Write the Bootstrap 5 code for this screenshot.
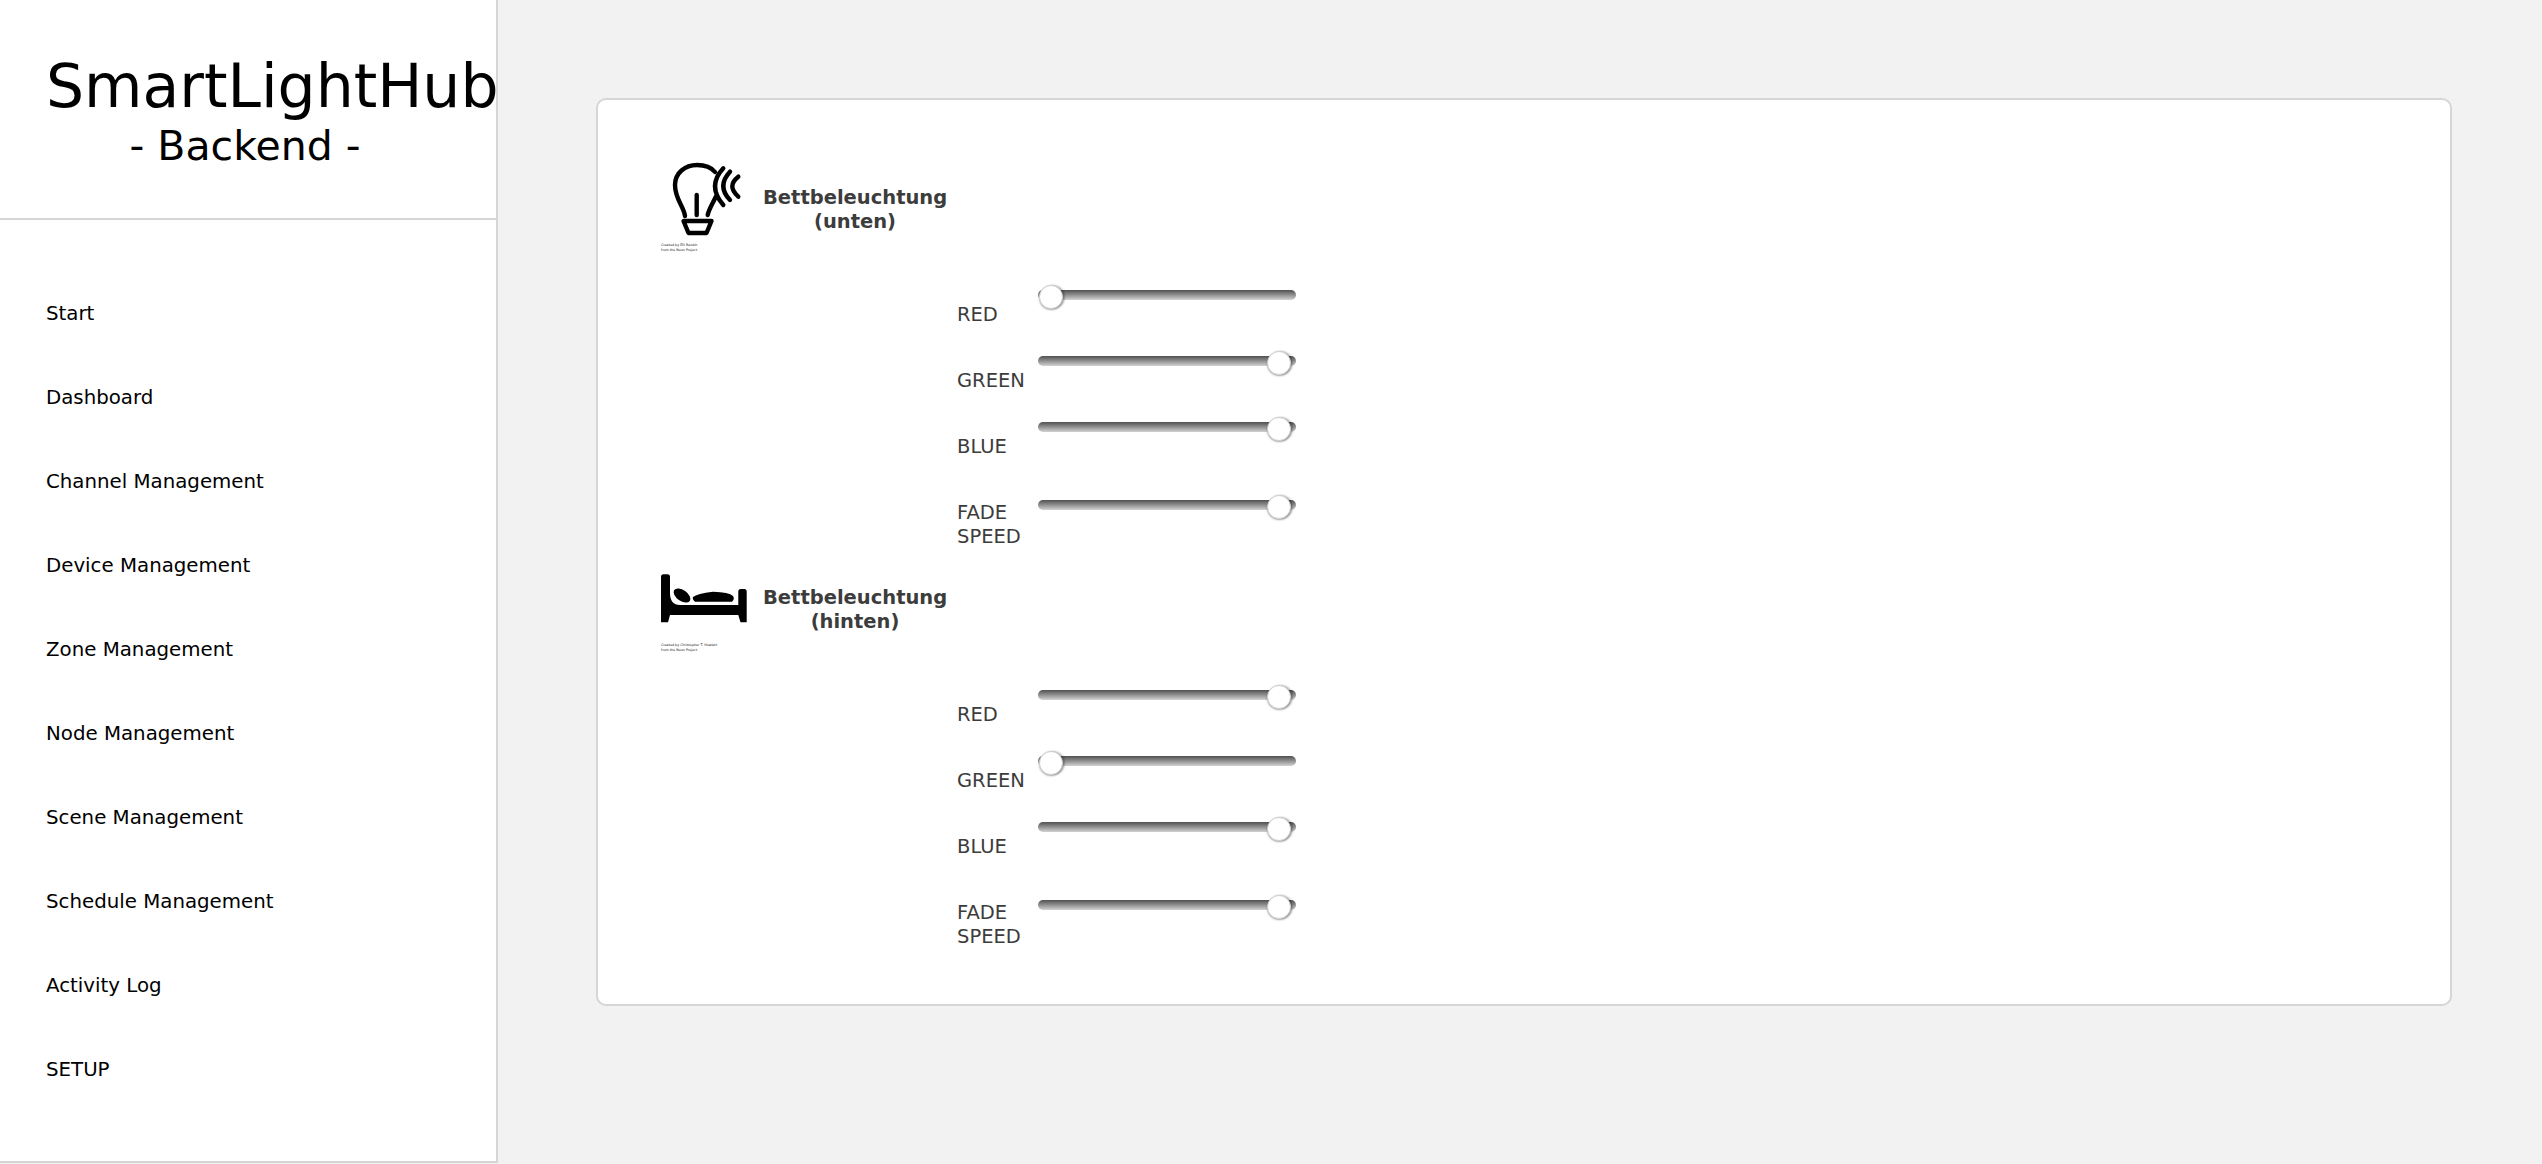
<!DOCTYPE html>
<html lang="de">
<head>
  <meta charset="UTF-8" />
  <meta name="viewport" content="width=device-width, initial-scale=1.0"/>
  <title>SmartLightHub | Backend</title>
  <link href="https://cdn.jsdelivr.net/npm/bootstrap@5.3.3/dist/css/bootstrap.min.css" rel="stylesheet">
  <style>
    html, body {
      height: 100%;
    }
    body {
      background-color: #f2f2f2;
      font-family: "DejaVu Sans", Verdana, sans-serif;
      overflow: hidden;
    }
    .side-panel {
      width: 498px;
      height: 1163px;
      background: #fff;
      border-right: 2px solid #d6d6d6;
      flex-shrink: 0;
    }
    .side-head {
      height: 220px;
      padding-top: 51px;
      border-bottom: 2px solid #d6d6d6;
      color: #000;
    }
    .hub-title {
      font-size: 60px;
      line-height: 70px;
      padding-left: 46px;
      white-space: nowrap;
      margin: 0;
    }
    .hub-sub {
      font-size: 41px;
      line-height: 46px;
      width: 490px;
      text-align: center;
      margin: 2px 0 0;
    }
    .side-menu {
      padding: 52px 0 49px;
      border-bottom: 2px solid #d6d6d6;
    }
    .side-menu a {
      display: flex;
      align-items: center;
      height: 84px;
      padding-left: 46px;
      font-size: 19.8px;
      color: #000;
      text-decoration: none;
    }
    .main-area {
      padding: 98px 0 0 98px;
    }
    .light-card {
      width: 1856px;
      height: 908px;
      padding: 53px 0 0 63px;
      background: #fff;
      border: 2px solid #d6d6d6;
      border-radius: 10px;
    }
    .light-block {
      height: 400px;
    }
    .light-head {
      height: 132px;
    }
    .light-icon {
      width: 102px;
      height: 100px;
      flex-shrink: 0;
    }
    .light-name {
      width: 184px;
      margin-top: 33px;
      font-size: 19.5px;
      font-weight: 700;
      line-height: 24px;
      text-align: center;
      color: #3c3c3c;
      white-space: nowrap;
    }
    .fader-row {
      height: 66px;
      margin-left: 296px;
    }
    .fader-row.fade-row {
      height: 70px;
    }
    .fader-label {
      width: 81px;
      margin-top: 18px;
      font-size: 19.5px;
      line-height: 24px;
      color: #3c3c3c;
    }
    .fader-wrap {
      padding-top: 5px;
    }
    .fade-row .fader-wrap {
      padding-top: 17px;
    }
    .fader {
      -webkit-appearance: none;
      appearance: none;
      display: block;
      box-sizing: border-box;
      width: 258px;
      height: 10px;
      padding: 0 5px 0 1px;
      margin: 0;
      border-radius: 5px;
      background: linear-gradient(#505050, #d2d2d2);
      outline: none;
    }
    .fader::-webkit-slider-runnable-track {
      height: 10px;
      background: transparent;
    }
    .fader::-webkit-slider-thumb {
      -webkit-appearance: none;
      width: 24px;
      height: 24px;
      margin-top: -5px;
      border-radius: 50%;
      background: #fff;
      border: 1px solid #cfcfcf;
      box-shadow: 0 1px 2px rgba(0, 0, 0, .3), 2px 0 2px rgba(0, 0, 0, .25);
    }
    .icon-note {
      font-family: "DejaVu Sans", sans-serif;
      font-size: 3.3px;
      fill: #111;
    }
  </style>
</head>
<body>

<div class="d-flex">
  <aside class="side-panel">
    <div class="side-head">
      <h1 class="hub-title fw-normal">SmartLightHub</h1>
      <p class="hub-sub">- Backend -</p>
    </div>
    <nav class="side-menu">
      <a href="#">Start</a>
      <a href="#">Dashboard</a>
      <a href="#">Channel Management</a>
      <a href="#">Device Management</a>
      <a href="#">Zone Management</a>
      <a href="#">Node Management</a>
      <a href="#">Scene Management</a>
      <a href="#">Schedule Management</a>
      <a href="#">Activity Log</a>
      <a href="#">SETUP</a>
    </nav>
  </aside>

  <main class="main-area">
    <div class="light-card">

      <section class="light-block">
        <div class="light-head d-flex">
          <svg class="light-icon" viewBox="0 0 102 100" aria-hidden="true">
            <g fill="none" stroke="#000" stroke-width="4.4" stroke-linecap="round" stroke-linejoin="round">
              <path d="M24 63C23 54 14 46 14 32C14 20 24 12 36 12C44 12 50 14 54 19"/>
              <path d="M54.700 44C52 50 48 56 46.700 62"/>
              <path d="M35.700 42V62"/>
              <path d="M22.500 68H50.500L45.500 80H27.500Z"/>
              <path d="M62.300 15.300Q45.700 33 62.300 52"/>
              <path d="M69 18.700Q55.600 33 69 47"/>
              <path d="M77.300 23.700Q65.300 33 77.300 43.700"/>
            </g>
            <text class="icon-note" x="0" y="93">Created by Elli Rendin</text>
            <text class="icon-note" x="0" y="97.500">from the Noun Project</text>
          </svg>
          <div class="light-name">Bettbeleuchtung<br>(unten)</div>
        </div>
        <div class="fader-row d-flex">
          <div class="fader-label">RED</div>
          <div class="fader-wrap"><input class="fader" type="range" min="0" max="255" value="0"></div>
        </div>
        <div class="fader-row d-flex">
          <div class="fader-label">GREEN</div>
          <div class="fader-wrap"><input class="fader" type="range" min="0" max="255" value="255"></div>
        </div>
        <div class="fader-row d-flex">
          <div class="fader-label">BLUE</div>
          <div class="fader-wrap"><input class="fader" type="range" min="0" max="255" value="255"></div>
        </div>
        <div class="fader-row fade-row d-flex">
          <div class="fader-label">FADE SPEED</div>
          <div class="fader-wrap"><input class="fader" type="range" min="0" max="255" value="255"></div>
        </div>
      </section>

      <section class="light-block">
        <div class="light-head d-flex">
          <svg class="light-icon" viewBox="0 0 102 100" aria-hidden="true">
            <path d="M2.500 21.300H6.500Q9 21.300 9 24V40Q9 52 19 52H77.300V38.500Q77.300 36 79.800 36H83.200Q85.700 36 85.700 38.500V69.300H79.500L77.300 62H9L7 69.300H0V24Q0 21.300 2.500 21.300Z"/>
            <ellipse cx="21" cy="42.500" rx="9.500" ry="5.500" transform="rotate(35 21 42.500)"/>
            <path d="M34 48.700Q31 46 32 44Q36 40.500 52 38.700Q68 39 72 43Q74 46 71 48.700Z"/>
            <text class="icon-note" x="0" y="93">Created by Christopher T. Howlett</text>
            <text class="icon-note" x="0" y="97.500">from the Noun Project</text>
          </svg>
          <div class="light-name">Bettbeleuchtung<br>(hinten)</div>
        </div>
        <div class="fader-row d-flex">
          <div class="fader-label">RED</div>
          <div class="fader-wrap"><input class="fader" type="range" min="0" max="255" value="255"></div>
        </div>
        <div class="fader-row d-flex">
          <div class="fader-label">GREEN</div>
          <div class="fader-wrap"><input class="fader" type="range" min="0" max="255" value="0"></div>
        </div>
        <div class="fader-row d-flex">
          <div class="fader-label">BLUE</div>
          <div class="fader-wrap"><input class="fader" type="range" min="0" max="255" value="255"></div>
        </div>
        <div class="fader-row fade-row d-flex">
          <div class="fader-label">FADE SPEED</div>
          <div class="fader-wrap"><input class="fader" type="range" min="0" max="255" value="255"></div>
        </div>
      </section>

    </div>
  </main>
</div>

<script src="https://cdn.jsdelivr.net/npm/bootstrap@5.3.3/dist/js/bootstrap.bundle.min.js"></script>
</body>
</html>
